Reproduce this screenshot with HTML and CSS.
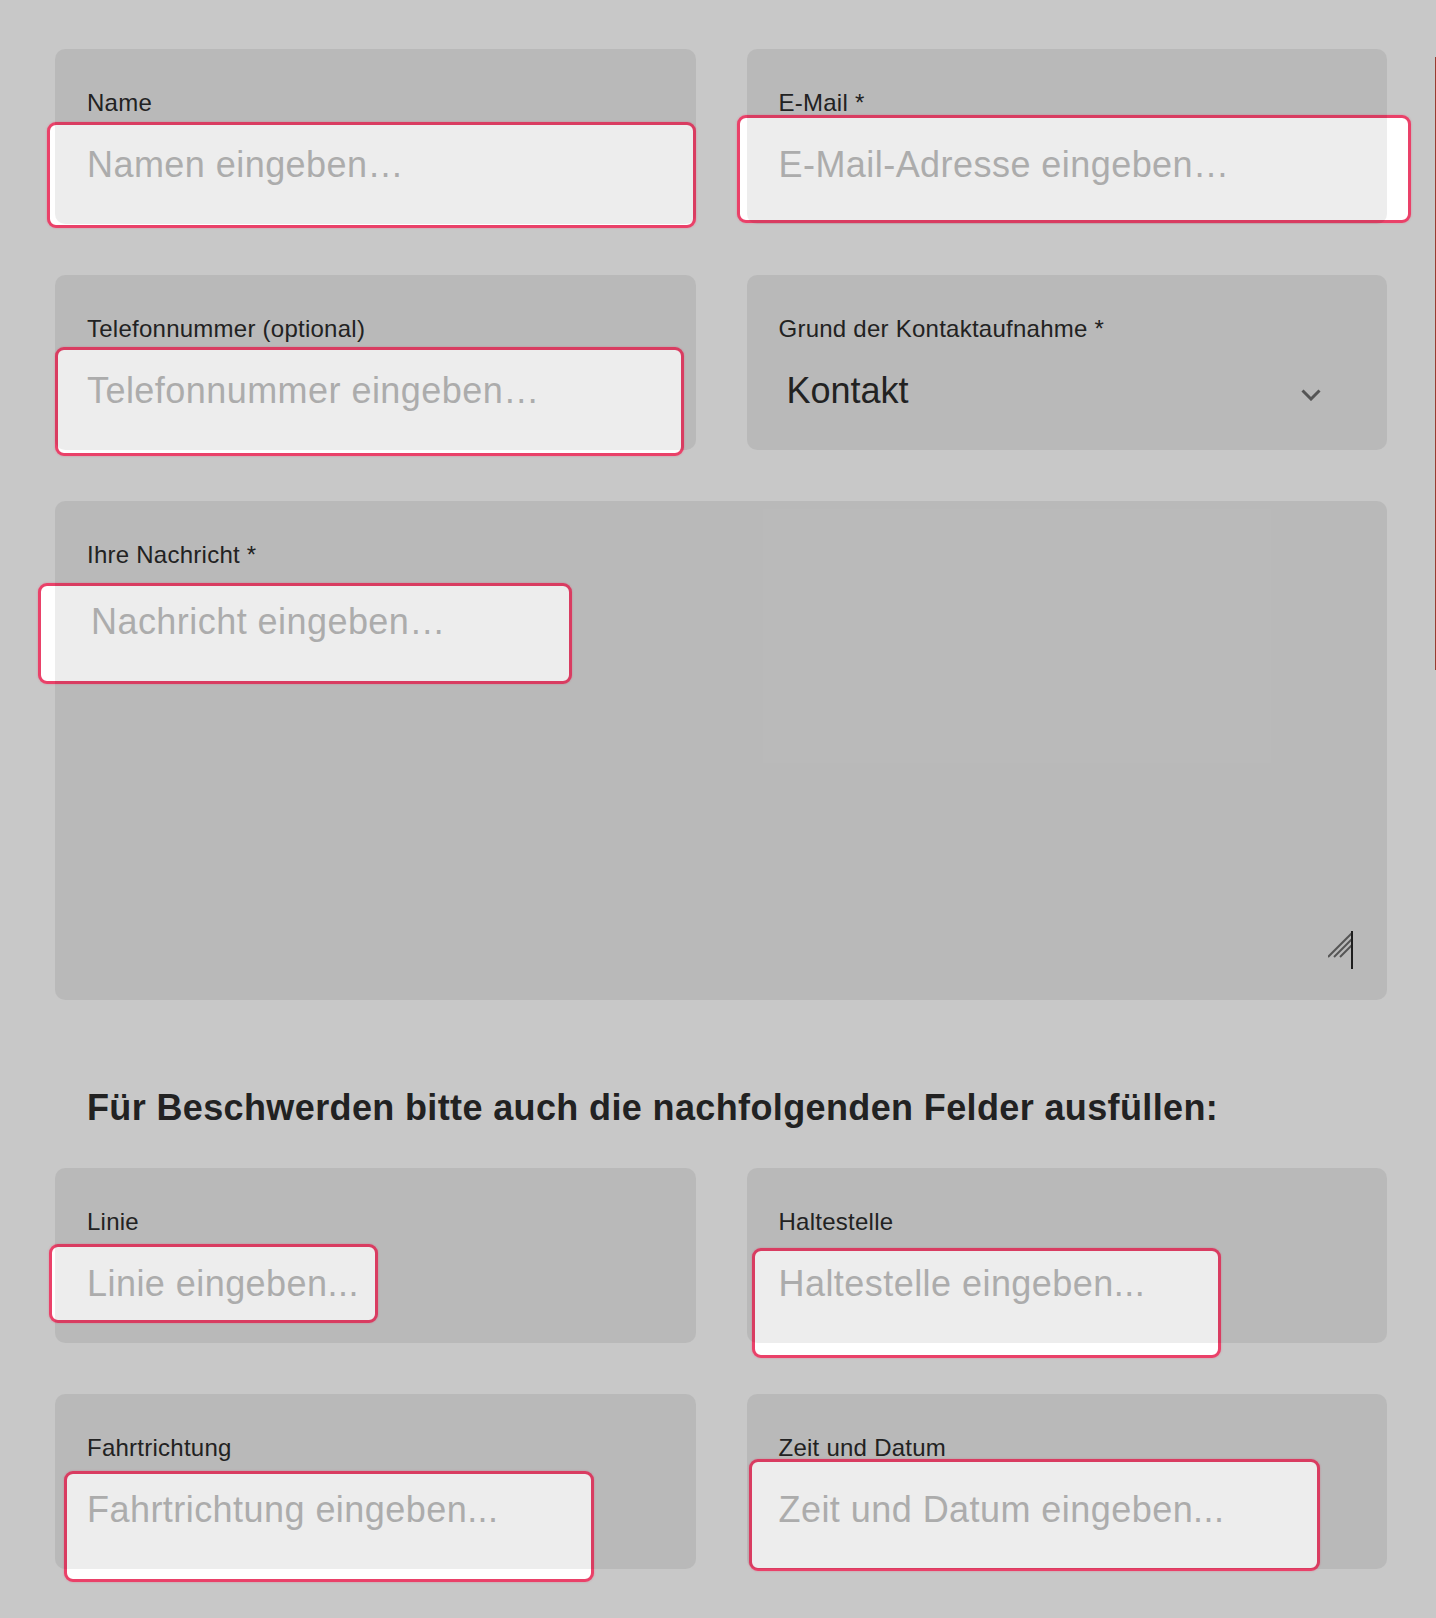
FILE: index.html
```html
<!DOCTYPE html>
<html lang="de">
<head>
  <meta charset="UTF-8">
  <meta name="viewport" content="width=device-width, initial-scale=1.0">
  <title>Kontaktformular</title>
  <link rel="stylesheet" href="styles.css">
</head>
<body>
  <form class="contact-form">
    <div class="grid">
      <div class="field">
        <span class="ring ring-name"></span>
        <label for="name">Name</label>
        <input type="text" id="name" placeholder="Namen eingeben…">
      </div>
      <div class="field">
        <span class="ring ring-email"></span>
        <label for="email">E-Mail *</label>
        <input type="email" id="email" placeholder="E-Mail-Adresse eingeben…">
      </div>
      <div class="field">
        <span class="ring ring-phone"></span>
        <label for="phone">Telefonnummer (optional)</label>
        <input type="tel" id="phone" placeholder="Telefonnummer eingeben…">
      </div>
      <div class="field">
        <label for="reason">Grund der Kontaktaufnahme *</label>
        <div class="select-row">
          <select id="reason">
            <option>Kontakt</option>
            <option>Beschwerde</option>
          </select>
          <svg class="chevron" width="20" height="12" viewBox="0 0 20 12">
            <polyline points="1.5,1.5 10,10 18.5,1.5" fill="none" stroke="#555" stroke-width="3"/>
          </svg>
        </div>
      </div>
      <div class="field wide">
        <span class="ring ring-message"></span>
        <label for="message">Ihre Nachricht *</label>
        <textarea id="message" placeholder="Nachricht eingeben…"></textarea>
        <svg class="grip" width="25" height="38" viewBox="0 0 25 38">
          <g stroke="#555" stroke-width="2">
            <line x1="0" y1="26" x2="24" y2="2"/>
            <line x1="6" y1="26" x2="24" y2="8"/>
            <line x1="12" y1="26" x2="24" y2="14"/>
          </g>
          <line x1="24" y1="0" x2="24" y2="38" stroke="#1e1e1e" stroke-width="2"/>
        </svg>
      </div>
    </div>

    <h3 class="note">Für Beschwerden bitte auch die nachfolgenden Felder ausfüllen:</h3>

    <div class="grid">
      <div class="field">
        <span class="ring ring-line"></span>
        <label for="line">Linie</label>
        <input type="text" id="line" placeholder="Linie eingeben...">
      </div>
      <div class="field">
        <span class="ring ring-stop"></span>
        <label for="stop">Haltestelle</label>
        <input type="text" id="stop" placeholder="Haltestelle eingeben...">
      </div>
      <div class="field">
        <span class="ring ring-direction"></span>
        <label for="direction">Fahrtrichtung</label>
        <input type="text" id="direction" placeholder="Fahrtrichtung eingeben...">
      </div>
      <div class="field">
        <span class="ring ring-time"></span>
        <label for="time">Zeit und Datum</label>
        <input type="text" id="time" placeholder="Zeit und Datum eingeben...">
      </div>
    </div>
  </form>
  <div class="edge"></div>
</body>
</html>
```

FILE: styles.css
```css
body {
  margin: 0;
  background-color: #c8c8c8;
  font-family: "Liberation Sans", Arial, Helvetica, sans-serif;
  color: #222;
  min-height: 1618px;
  position: relative;
}

.contact-form {
  padding: 49px 49px 0 55px;
}

.grid {
  display: grid;
  grid-template-columns: 1fr 1fr;
  column-gap: 51px;
  row-gap: 51px;
}

.field {
  position: relative;
  height: 175px;
  box-sizing: border-box;
  padding: 40px 32px 0;
  border-radius: 10px;
}

/* grey tint sits above the highlight box so it shows light grey inside the card */
.field::after {
  content: "";
  position: absolute;
  top: 0;
  left: 0;
  right: 0;
  bottom: 0;
  border-radius: 10px;
  background-color: rgba(0, 0, 0, 0.07);
  z-index: 2;
  pointer-events: none;
}

.field.wide {
  grid-column: 1 / -1;
  height: 499px;
}

.field label {
  position: relative;
  z-index: 3;
  display: block;
  font-size: 24px;
  line-height: 28px;
  letter-spacing: 0.25px;
  color: #222;
}

.field input,
.field textarea,
.field select {
  position: relative;
  z-index: 3;
  display: block;
  box-sizing: border-box;
  width: 100%;
  height: 44px;
  margin: 26px 0 0;
  padding: 0;
  border: 0;
  outline: none;
  background: transparent;
  font-family: inherit;
  font-size: 36px;
  line-height: 44px;
  letter-spacing: 0.45px;
  color: #222;
}

.field input::placeholder,
.field textarea::placeholder {
  color: #acacac;
}

.field textarea {
  margin-top: 31px;
  padding-left: 4px;
  height: 340px;
  resize: none;
  overflow: hidden;
}

.select-row {
  position: relative;
  z-index: 3;
  display: flex;
  align-items: center;
  margin-top: 26px;
}

.select-row select {
  flex: 1;
  margin: 0;
  padding-left: 8px;
  letter-spacing: 0;
  appearance: none;
  -webkit-appearance: none;
}

.chevron {
  flex: none;
  margin: 8px 34px 0 0;
}

.grip {
  position: absolute;
  right: 34px;
  bottom: 31px;
  z-index: 3;
}

.ring {
  position: absolute;
  z-index: 1;
  box-sizing: border-box;
  background-color: #fff;
  border: 3px solid #ea4169;
  border-radius: 9px;
  box-shadow: 0 0 2px rgba(234, 65, 105, 0.45);
}

.ring-name { left: -8px; top: 73px; width: 649px; height: 106px; }
.ring-email { left: -10px; top: 66px; width: 674px; height: 108px; }
.ring-phone { left: 0; top: 72px; width: 629px; height: 109px; }
.ring-message { left: -17px; top: 82px; width: 534px; height: 101px; }
.ring-line { left: -6px; top: 76px; width: 329px; height: 79px; }
.ring-stop { left: 5px; top: 80px; width: 469px; height: 110px; }
.ring-direction { left: 9px; top: 77px; width: 530px; height: 111px; }
.ring-time { left: 2px; top: 65px; width: 571px; height: 112px; }

.note {
  margin: 86px 0 38px 32px;
  font-size: 36px;
  line-height: 44px;
  font-weight: bold;
  letter-spacing: 0.37px;
  color: #222;
}

.edge {
  position: absolute;
  right: 0;
  top: 57px;
  width: 1px;
  height: 613px;
  background-color: #9c3b2f;
}
```
